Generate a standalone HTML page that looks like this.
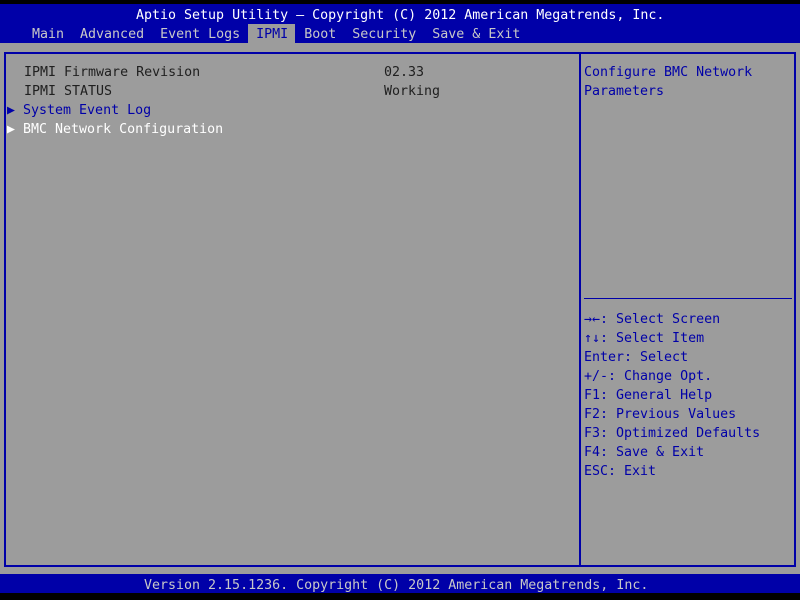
<!DOCTYPE html>
<html><head><style>
body{margin:0;width:800px;height:600px;background:#000;position:relative;overflow:hidden;font-family:"DejaVu Sans Mono","Liberation Mono",monospace;font-size:13.3px;}
div{position:absolute;white-space:pre;line-height:19px;}
.t{height:19px;}
</style></head><body>
<div style="left:0;top:4px;width:800px;height:39px;background:#0000a8"></div>
<div style="left:0;top:43px;width:800px;height:531px;background:#9c9c9c"></div>
<div style="left:0;top:574px;width:800px;height:19px;background:#0000a8"></div>
<div style="left:248px;top:24px;width:47px;height:19px;background:#9c9c9c"></div>
<div style="left:4px;top:52px;width:788px;height:511px;border:2px solid #0000a8"></div>
<div style="left:579px;top:52px;width:2px;height:513px;background:#0000a8"></div>
<div style="left:584px;top:298px;width:208px;height:1px;background:#0000a8"></div>
<div class="t" style="left:136px;top:6px;color:#fff">Aptio Setup Utility – Copyright (C) 2012 American Megatrends, Inc.</div>
<div class="t" style="left:32px;top:25px;color:#c8c8c8">Main  Advanced  Event Logs  <span style="color:#0000a8">IPMI</span>  Boot  Security  Save &amp; Exit</div>
<div class="t" style="left:24px;top:63px;color:#202020">IPMI Firmware Revision</div>
<div class="t" style="left:384px;top:63px;color:#202020">02.33</div>
<div class="t" style="left:24px;top:82px;color:#202020">IPMI STATUS</div>
<div class="t" style="left:384px;top:82px;color:#202020">Working</div>
<div class="t" style="left:7px;top:101px;color:#0000a8">▶ System Event Log</div>
<div class="t" style="left:7px;top:120px;color:#fff">▶ BMC Network Configuration</div>
<div class="t" style="left:584px;top:63px;color:#0000a8">Configure BMC Network
Parameters</div>
<div class="t" style="left:584px;top:310px;color:#0000a8">→←: Select Screen
↑↓: Select Item
Enter: Select
+/-: Change Opt.
F1: General Help
F2: Previous Values
F3: Optimized Defaults
F4: Save &amp; Exit
ESC: Exit</div>
<div class="t" style="left:144px;top:576px;color:#c8c8c8">Version 2.15.1236. Copyright (C) 2012 American Megatrends, Inc.</div>
</body></html>
